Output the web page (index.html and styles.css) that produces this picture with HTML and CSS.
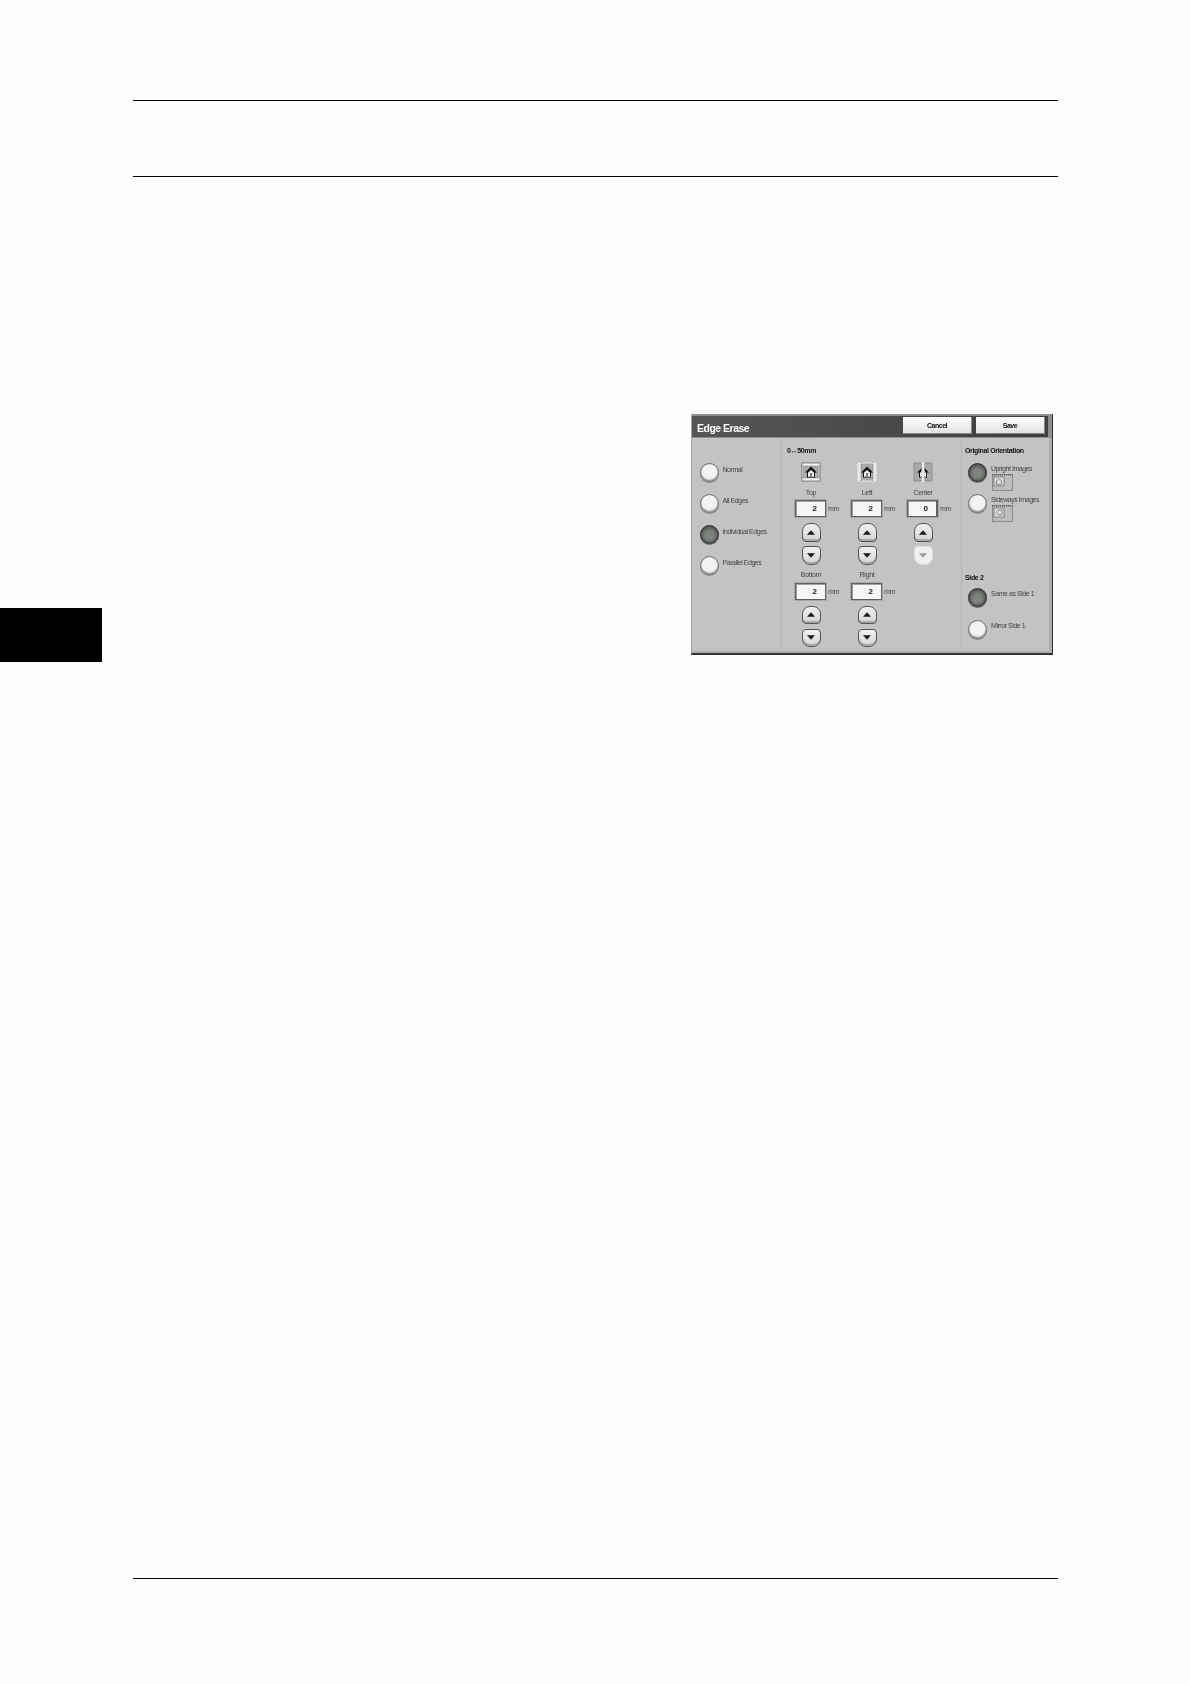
FILE: index.html
```html
<!DOCTYPE html>
<html lang="en">
<head>
    <meta charset="UTF-8">
    <meta name="viewport" content="width=device-width, initial-scale=1.0">
    <title>Edge Erase</title>
    <link rel="stylesheet" href="styles.css">
</head>
<body>
    <svg class="icon-defs" width="0" height="0" aria-hidden="true">
        <defs>
            <symbol id="house" viewBox="0 0 20 20">
                <path d="M10 4.5 4 10.5h2v5h8v-5h2z" fill="#111"/>
                <path d="M10 8 7 10.8v3.9h6v-3.9z" fill="#f4f4f4"/>
                <path d="M9 11h2v3.7H9z" fill="#777"/>
            </symbol>
            <symbol id="arrow-up" viewBox="0 0 9 5">
                <path d="M4.5 0 9 5H0z"/>
            </symbol>
            <symbol id="arrow-down" viewBox="0 0 9 5">
                <path d="M0 0h9L4.5 5z"/>
            </symbol>
        </defs>
    </svg>

    <header class="page-head"></header>

    <main class="page-body">
        <div class="chapter-tab"></div>

        <section class="panel">
            <div class="title-strip">
                <div class="title-bar">
                    <h1 class="panel-title">Edge Erase</h1>
                    <button type="button" class="title-btn">Cancel</button>
                    <button type="button" class="title-btn">Save</button>
                </div>
            </div>

            <div class="panel-body">
                <div class="modes">
                    <div class="radio-row"><span class="radio"></span><span class="radio-label">Normal</span></div>
                    <div class="radio-row"><span class="radio"></span><span class="radio-label">All Edges</span></div>
                    <div class="radio-row"><span class="radio on"></span><span class="radio-label">Individual Edges</span></div>
                    <div class="radio-row"><span class="radio"></span><span class="radio-label">Parallel Edges</span></div>
                </div>

                <div class="amounts">
                    <h2 class="group-title">0↔50mm</h2>
                    <div class="amount-grid">
                        <div class="amount">
                            <svg class="tile" viewBox="0 0 20 20">
                                <rect x="1" y="1" width="18" height="18" fill="#f2f2f2" stroke="#444" stroke-width=".6"/>
                                <rect x="1.5" y="4" width="17" height="12" fill="#a9a9a9"/>
                                <path d="M0 4h20M0 16h20" stroke="#555" stroke-width=".6" stroke-dasharray="1 1"/>
                                <use href="#house" width="20" height="20"/>
                            </svg>
                            <span class="amount-label">Top</span>
                            <div class="field"><span class="value">2</span><span class="unit">mm</span></div>
                            <button type="button" class="step up"><svg class="arrow"><use href="#arrow-up"/></svg></button>
                            <button type="button" class="step down"><svg class="arrow"><use href="#arrow-down"/></svg></button>
                        </div>
                        <div class="amount">
                            <svg class="tile" viewBox="0 0 20 20">
                                <rect x="1" y="1" width="18" height="18" fill="#a9a9a9" stroke="#eee"/>
                                <rect x="1" y="1" width="3" height="18" fill="#e8e8e8"/>
                                <rect x="16" y="1" width="3" height="18" fill="#e8e8e8"/>
                                <path d="M4 0v20M16 0v20" stroke="#555" stroke-width=".6" stroke-dasharray="1 1"/>
                                <use href="#house" width="20" height="20"/>
                            </svg>
                            <span class="amount-label">Left</span>
                            <div class="field"><span class="value">2</span><span class="unit">mm</span></div>
                            <button type="button" class="step up"><svg class="arrow"><use href="#arrow-up"/></svg></button>
                            <button type="button" class="step down"><svg class="arrow"><use href="#arrow-down"/></svg></button>
                        </div>
                        <div class="amount">
                            <svg class="tile" viewBox="0 0 20 20">
                                <rect x="1" y="1" width="18" height="18" fill="#a9a9a9" stroke="#777" stroke-width=".6"/>
                                <use href="#house" width="20" height="20"/>
                                <rect x="8.5" y="0" width="3" height="20" fill="#ececec"/>
                                <path d="M8.5 0v20M11.5 0v20" stroke="#666" stroke-width=".5" stroke-dasharray="1 1"/>
                            </svg>
                            <span class="amount-label">Center</span>
                            <div class="field current"><span class="value">0</span><span class="unit">mm</span></div>
                            <button type="button" class="step up"><svg class="arrow"><use href="#arrow-up"/></svg></button>
                            <button type="button" class="step down off"><svg class="arrow"><use href="#arrow-down"/></svg></button>
                        </div>
                        <div class="amount lower">
                            <span class="amount-label">Bottom</span>
                            <div class="field"><span class="value">2</span><span class="unit">mm</span></div>
                            <button type="button" class="step up"><svg class="arrow"><use href="#arrow-up"/></svg></button>
                            <button type="button" class="step down"><svg class="arrow"><use href="#arrow-down"/></svg></button>
                        </div>
                        <div class="amount lower">
                            <span class="amount-label">Right</span>
                            <div class="field"><span class="value">2</span><span class="unit">mm</span></div>
                            <button type="button" class="step up"><svg class="arrow"><use href="#arrow-up"/></svg></button>
                            <button type="button" class="step down"><svg class="arrow"><use href="#arrow-down"/></svg></button>
                        </div>
                    </div>
                </div>

                <div class="options">
                    <h2 class="group-title">Original Orientation</h2>
                    <div class="radio-row thumb-row">
                        <span class="radio on"></span>
                        <div class="radio-text">
                            <span class="radio-label">Upright Images</span>
                            <svg class="thumb" viewBox="0 0 21 17">
                                <rect x=".5" y=".5" width="20" height="16" fill="#bdbdbd" stroke="#8a8a8a"/>
                                <path d="M0 1h21" stroke="#444" stroke-dasharray="1 1"/>
                                <rect x="2" y="3" width="10" height="9" fill="#dcdcdc" stroke="#666" stroke-width=".7"/>
                                <path d="M7 4.5 4.5 7v3.5h5V7z" fill="none" stroke="#666" stroke-width=".7"/>
                            </svg>
                        </div>
                    </div>
                    <div class="radio-row thumb-row">
                        <span class="radio"></span>
                        <div class="radio-text">
                            <span class="radio-label">Sideways Images</span>
                            <svg class="thumb" viewBox="0 0 21 17">
                                <rect x=".5" y=".5" width="20" height="16" fill="#bdbdbd" stroke="#8a8a8a"/>
                                <path d="M0 1h21" stroke="#444" stroke-dasharray="1 1"/>
                                <rect x="2" y="3" width="10" height="9" fill="#dcdcdc" stroke="#666" stroke-width=".7"/>
                                <path d="M4 7.5 6.5 5h3.5v5H6.5z" fill="none" stroke="#666" stroke-width=".7"/>
                            </svg>
                        </div>
                    </div>
                    <h2 class="group-title side-title">Side 2</h2>
                    <div class="radio-row side-row"><span class="radio on"></span><span class="radio-label">Same as Side 1</span></div>
                    <div class="radio-row side-row"><span class="radio"></span><span class="radio-label">Mirror Side 1</span></div>
                </div>
            </div>
        </section>
    </main>

    <footer class="page-foot"></footer>
</body>
</html>
```

FILE: styles.css
```css
* {
    box-sizing: border-box;
}
body {
    margin: 0;
    height: 1684px;
    overflow: hidden;
    background-color: #fefefe;
    font-family: "Liberation Sans", Arial, sans-serif;
}
.icon-defs {
    position: absolute;
}
.page-head {
    height: 77px;
    margin: 100px 132px 0 133px;
    border-top: 1px solid #000;
    border-bottom: 1px solid #000;
}
.page-body {
    display: flex;
    align-items: flex-start;
    height: 1401px;
    padding-top: 237px;
}
.page-foot {
    margin: 0 132px 0 133px;
    border-top: 1px solid #000;
}
.chapter-tab {
    width: 102px;
    height: 54px;
    margin-top: 194px;
    background-color: #000;
}

/* Edge Erase panel */
.panel {
    display: flex;
    flex-direction: column;
    width: 362px;
    height: 241px;
    margin-left: 589px;
    background-color: #c3c3c3;
    border-left: 1px solid #a0a0a0;
    border-right: 1px solid #333;
    border-bottom: 2px solid #333;
    filter: blur(0.45px);
}
.title-strip {
    padding: 2px 4px 1px 0;
    background-color: #8f8f8f;
}
.title-bar {
    display: flex;
    align-items: flex-start;
    gap: 4px;
    height: 21px;
    padding: 1px 3px 0 5px;
    background: linear-gradient(to right, #565656, #3e3e3e);
}
.panel-title {
    flex: 1;
    margin: 0;
    color: #fff;
    font-size: 10.5px;
    line-height: 22px;
    font-weight: bold;
    letter-spacing: -0.5px;
}
.title-btn {
    width: 69px;
    height: 17px;
    padding: 0;
    background: linear-gradient(#fff, #e2e2e2);
    border: none;
    border-right: 1px solid #888;
    border-bottom: 1px solid #888;
    color: #111;
    font-family: inherit;
    font-size: 7px;
    font-weight: bold;
    letter-spacing: -0.5px;
}
.panel-body {
    flex: 1;
    display: flex;
    border-right: 3px solid #adadad;
    border-bottom: 2px solid #adadad;
}
.modes {
    width: 89px;
    padding: 24.5px 0 0 7.5px;
}
.modes .radio-row {
    margin-bottom: 12.3px;
}
.radio-row {
    display: flex;
    align-items: flex-start;
    gap: 4px;
}
.radio {
    flex: none;
    width: 19px;
    height: 19px;
    border-radius: 50%;
    border: 1px solid #707070;
    background: radial-gradient(circle at 50% 45%, #f3f3f3 50%, #c4c4c4);
    box-shadow: inset 0 -1px 1px #999, 0 1px 0 #8a8a8a;
}
.radio.on {
    border-color: #2e2e2e;
    background: radial-gradient(circle at 50% 55%, #7e837e 30%, #4a4a4a 85%);
    box-shadow: inset 0 0 1px #222, 0 1px 0 #666;
}
.radio-label {
    margin-top: 2px;
    color: #444;
    font-size: 7px;
    line-height: 10px;
    letter-spacing: -0.45px;
    white-space: nowrap;
}
.radio-text .radio-label,
.side-row .radio-label {
    margin-top: 1px;
}
.group-title {
    margin: 0;
    color: #111;
    font-size: 7px;
    line-height: 8px;
    font-weight: bold;
    letter-spacing: -0.35px;
}
.amounts {
    width: 180px;
    padding: 9px 0 0 1px;
    border-left: 1px solid #b5b5b5;
}
.amounts .group-title {
    padding-left: 4px;
}
.amount-grid {
    display: grid;
    grid-template-columns: repeat(3, 56px);
}
.amount {
    display: flex;
    flex-direction: column;
    align-items: center;
    padding-top: 6.5px;
}
.amount.lower {
    padding-top: 5.5px;
}
.tile {
    width: 20px;
    height: 20px;
    margin-bottom: 6px;
}
.amount-label {
    color: #444;
    font-size: 7px;
    line-height: 10px;
    letter-spacing: -0.3px;
}
.field {
    align-self: flex-start;
    display: flex;
    align-items: center;
    margin: 2.5px 0 0 12px;
}
.value {
    width: 31px;
    height: 17px;
    padding-right: 8px;
    background-color: #f6f6f6;
    border: 1px solid #606060;
    box-shadow: inset 1px 1px 0 #a0a0a0, 0 0 0 1px #a8a8a8;
    color: #111;
    font-size: 8px;
    line-height: 15px;
    font-weight: bold;
    text-align: right;
}
.field.current .value {
    border-right-width: 2px;
}
.unit {
    margin-left: 2px;
    color: #444;
    font-size: 7px;
    letter-spacing: -0.45px;
}
.step {
    display: flex;
    align-items: center;
    justify-content: center;
    width: 19px;
    height: 18.5px;
    padding: 0;
    background: linear-gradient(#f0f0f0, #d6d6d6);
    border: 1px solid #555;
    box-shadow: inset 0 -2px 0 #a8a8a8;
}
.step.up {
    margin-top: 6px;
    border-radius: 8px 8px 4px 4px;
}
.step.down {
    margin-top: 4.5px;
    border-radius: 4px 4px 8px 8px;
}
.step.off {
    background: #efefef;
    border-color: #dcdcdc;
    box-shadow: none;
}
.arrow {
    width: 8px;
    height: 5px;
    fill: #1a1a1a;
}
.step.off .arrow {
    fill: #9a9a9a;
}
.options {
    flex: 1;
    padding: 9px 0 0 3px;
    border-left: 1px solid #b5b5b5;
}
.options .radio-row {
    margin-left: 3px;
}
.radio-text {
    display: flex;
    flex-direction: column;
    align-items: flex-start;
}
.thumb {
    width: 21px;
    height: 17px;
    margin-left: 1px;
}
.thumb-row {
    height: 27px;
    margin-top: 4px;
}
.group-title + .thumb-row {
    margin-top: 7.5px;
}
.side-title {
    margin-top: 53.5px;
}
.side-row {
    height: 19px;
    margin-top: 13px;
}
.side-title + .side-row {
    margin-top: 5.5px;
}
```
